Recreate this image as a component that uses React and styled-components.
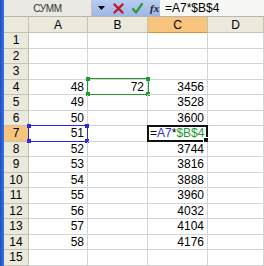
import React from "react";
import styled, { createGlobalStyle } from "styled-components";

const GlobalStyle = createGlobalStyle`
  html, body {
    margin: 0;
    padding: 0;
    background: #ffffff;
  }
  body {
    font-family: "Liberation Sans", Arial, sans-serif;
    overflow: hidden;
  }
`;

const columns = ["A", "B", "C", "D"];
const rows = Array.from({ length: 15 }, (_, i) => i + 1);

const values = {
  A: { 4: "48", 5: "49", 6: "50", 7: "51", 8: "52", 9: "53", 10: "54", 11: "55", 12: "56", 13: "57", 14: "58" },
  B: { 4: "72" },
  C: { 4: "3456", 5: "3528", 6: "3600", 8: "3744", 9: "3816", 10: "3888", 11: "3960", 12: "4032", 13: "4104", 14: "4176" },
};

const App = () => {
  return (
    <Window>
      <GlobalStyle />
      <Edge />
      <Main>
        <FormulaBar>
          <NameBox>СУММ</NameBox>
          <Buttons>
            <svg width="7" height="4" viewBox="0 0 7 4">
              <path d="M0 0h7L3.5 4z" fill="#000" />
            </svg>
            <svg width="11" height="11" viewBox="0 0 11 11">
              <path d="M1.5 1.5l8 8M9.5 1.5l-8 8" stroke="#c0182a" strokeWidth="2.4" strokeLinecap="round" />
            </svg>
            <svg width="11" height="11" viewBox="0 0 11 11">
              <path d="M1 6l3 3.5L10 1" stroke="#2f9a3a" strokeWidth="2.2" fill="none" strokeLinecap="round" strokeLinejoin="round" />
            </svg>
            <Fx>fx</Fx>
          </Buttons>
          <FormulaText>=A7*$B$4</FormulaText>
        </FormulaBar>
        <Sheet>
          <Corner />
          {columns.map((col) => (
            <ColHeader key={col} $active={col === "C"}>{col}</ColHeader>
          ))}
          {rows.map((row) => (
            <React.Fragment key={row}>
              <RowHeader $active={row === 7}>{row}</RowHeader>
              {columns.map((col) => (
                <Cell key={col}>
                  {values[col]?.[row]}
                  {col === "A" && row === 7 && (
                    <RefBox $color="#2a2ae0">
                      <Handle $color="#2a2ae0" $x="left" $y="top" />
                      <Handle $color="#2a2ae0" $x="right" $y="top" />
                      <Handle $color="#2a2ae0" $x="left" $y="bottom" />
                      <Handle $color="#2a2ae0" $x="right" $y="bottom" />
                    </RefBox>
                  )}
                  {col === "B" && row === 4 && (
                    <RefBox $color="#1f9a2f" $inset="-2px">
                      <Handle $color="#1f9a2f" $x="left" $y="top" />
                      <Handle $color="#1f9a2f" $x="right" $y="top" />
                      <Handle $color="#1f9a2f" $x="left" $y="bottom" />
                      <Handle $color="#1f9a2f" $x="right" $y="bottom" />
                    </RefBox>
                  )}
                  {col === "C" && row === 7 && (
                    <EditBox>
                      <span>=</span>
                      <Ref $color="#2a2ae0">A7</Ref>
                      <span>*</span>
                      <Ref $color="#1f9a2f">$B$4</Ref>
                      <FillHandle />
                    </EditBox>
                  )}
                </Cell>
              ))}
            </React.Fragment>
          ))}
        </Sheet>
      </Main>
    </Window>
  );
};

export default App;

const Window = styled.div`
  display: flex;
  width: 264px;
  height: 266px;
  overflow: hidden;
  background: #ffffff;
`;

const Edge = styled.div`
  width: 4px;
  flex-shrink: 0;
  background: linear-gradient(to right, #1d4fc4, #3a74e0);
`;

const Main = styled.div`
  flex: 1;
  display: flex;
  flex-direction: column;
  min-width: 0;
`;

const FormulaBar = styled.div`
  display: flex;
  height: 17px;
  flex-shrink: 0;
  border-bottom: 1px solid #b9b6a8;
  box-sizing: border-box;
`;

const NameBox = styled.div`
  width: 88px;
  display: flex;
  align-items: center;
  justify-content: center;
  background: #e9e8e2;
  border-right: 1px solid #c8c6bc;
  box-sizing: border-box;
  font-size: 10px;
  letter-spacing: -0.4px;
  color: #333;
`;

const Buttons = styled.div`
  width: 68px;
  display: flex;
  align-items: center;
  gap: 8px;
  padding-left: 6px;
  box-sizing: border-box;
  background: linear-gradient(to bottom, #b8ccf0, #9db7e6);
`;

const Fx = styled.span`
  font-family: "Liberation Serif", "Times New Roman", serif;
  font-style: italic;
  font-weight: bold;
  font-size: 11px;
  color: #222;
  margin-left: -1px;
`;

const FormulaText = styled.div`
  flex: 1;
  display: flex;
  align-items: center;
  padding-left: 5px;
  font-size: 12px;
  color: #000;
  background: #f7f7f4;
`;

const Sheet = styled.div`
  display: grid;
  grid-template-columns: 25px 59px 60px 60px 1fr;
  grid-template-rows: 16px repeat(15, 15.5px);
`;

const HeaderBase = styled.div`
  display: flex;
  align-items: center;
  justify-content: center;
  font-size: 12px;
  color: #000;
  box-sizing: border-box;
  border-right: 1px solid #c5c2b2;
  border-bottom: 1px solid #c5c2b2;
  background: ${(p) => (p.$active ? "#f7c47d" : "#ebe9dc")};
`;

const Corner = styled(HeaderBase)``;

const ColHeader = styled(HeaderBase)`
  border-bottom-color: ${(p) => (p.$active ? "#d9953a" : "#c5c2b2")};
`;

const RowHeader = styled(HeaderBase)`
  border-right-color: ${(p) => (p.$active ? "#d9953a" : "#c5c2b2")};
`;

const Cell = styled.div`
  position: relative;
  display: flex;
  align-items: center;
  justify-content: flex-end;
  padding-right: 3px;
  font-size: 12px;
  color: #000;
  box-sizing: border-box;
  border-right: 1px solid #d4d4d4;
  border-bottom: 1px solid #d4d4d4;
`;

const RefBox = styled.div`
  position: absolute;
  inset: ${(p) => p.$inset || "-1px"} ${(p) => p.$inset || "-1px"} -1px -1px;
  border: 1px solid ${(p) => p.$color};
  pointer-events: none;
`;

const Handle = styled.div`
  position: absolute;
  width: 4px;
  height: 4px;
  background: ${(p) => p.$color};
  ${(p) => (p.$x === "left" ? "left: -2px;" : "right: -2px;")}
  ${(p) => (p.$y === "top" ? "top: -2px;" : "bottom: -2px;")}
`;

const EditBox = styled.div`
  position: absolute;
  inset: -1px -1px -1px -1px;
  border: 2px solid #111;
  background: #ffffff;
  display: flex;
  align-items: center;
  padding-left: 1px;
  font-size: 12px;
  color: #000;
  white-space: nowrap;
  box-sizing: border-box;
`;

const Ref = styled.span`
  color: ${(p) => p.$color};
`;

const FillHandle = styled.div`
  position: absolute;
  right: -3px;
  bottom: -3px;
  width: 4px;
  height: 4px;
  background: #111;
  border: 1px solid #fff;
`;
